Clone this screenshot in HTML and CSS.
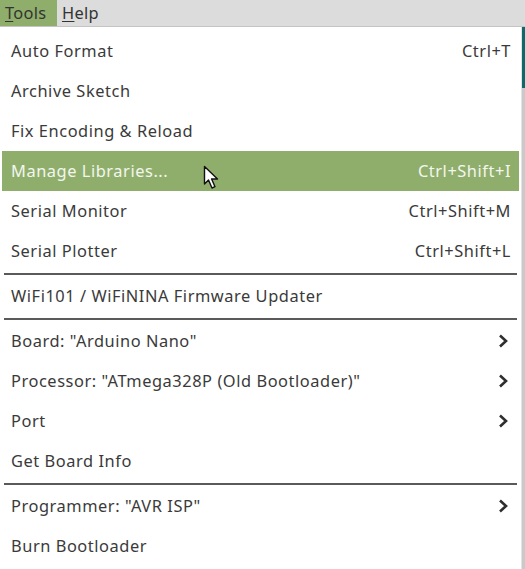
FILE: index.html
```html
<!DOCTYPE html>
<html>
<head>
<meta charset="utf-8">
<link rel="stylesheet" href="styles.css">
</head>
<body>
<div class="screen">
  <div class="menubar">
    <span class="mb-item active"><u>T</u>ools</span>
    <span class="mb-item"><u>H</u>elp</span>
  </div>
  <div class="main">
    <div class="menu">
      <div class="row"><span>Auto Format</span><span class="sc">Ctrl+T</span></div>
      <div class="row"><span>Archive Sketch</span></div>
      <div class="row"><span>Fix Encoding &amp; Reload</span></div>
      <div class="row hl"><span>Manage Libraries...</span><span class="sc">Ctrl+Shift+I</span>
        <svg class="cursor" width="18" height="26" viewBox="0 0 18 26"><path d="M1.5 1.5 L1.5 19 L5.5 15 L9 23 L12 21.7 L8.6 14 L14.5 14 Z" fill="#fff" stroke="#111" stroke-width="1.4" stroke-linejoin="round"/></svg>
      </div>
      <div class="row"><span>Serial Monitor</span><span class="sc">Ctrl+Shift+M</span></div>
      <div class="row"><span>Serial Plotter</span><span class="sc">Ctrl+Shift+L</span></div>
      <div class="sep"></div>
      <div class="row"><span>WiFi101 / WiFiNINA Firmware Updater</span></div>
      <div class="sep"></div>
      <div class="row"><span>Board: "Arduino Nano"</span><svg class="chev" width="12" height="16" viewBox="0 0 12 16"><path d="M3 2.5 L9 8 L3 13.5" fill="none" stroke="#2e2e2e" stroke-width="2.6"/></svg></div>
      <div class="row"><span>Processor: "ATmega328P (Old Bootloader)"</span><svg class="chev" width="12" height="16" viewBox="0 0 12 16"><path d="M3 2.5 L9 8 L3 13.5" fill="none" stroke="#2e2e2e" stroke-width="2.6"/></svg></div>
      <div class="row"><span>Port</span><svg class="chev" width="12" height="16" viewBox="0 0 12 16"><path d="M3 2.5 L9 8 L3 13.5" fill="none" stroke="#2e2e2e" stroke-width="2.6"/></svg></div>
      <div class="row"><span>Get Board Info</span></div>
      <div class="sep"></div>
      <div class="row"><span>Programmer: "AVR ISP"</span><svg class="chev" width="12" height="16" viewBox="0 0 12 16"><path d="M3 2.5 L9 8 L3 13.5" fill="none" stroke="#2e2e2e" stroke-width="2.6"/></svg></div>
      <div class="row"><span>Burn Bootloader</span></div>
    </div>
    <div class="side">
      <div class="teal"></div>
    </div>
  </div>
</div>
</body>
</html>
```

FILE: styles.css
```css
html, body {
  margin: 0;
  padding: 0;
}
body {
  width: 525px;
  height: 569px;
  overflow: hidden;
  font-family: "Noto Sans", "DejaVu Sans", sans-serif;
  font-size: 16.4px;
  letter-spacing: 0.55px;
  color: #3a3a3a;
  background: #d0d0d0;
}
.screen {
  display: flex;
  flex-direction: column;
  height: 569px;
}
.menubar {
  height: 27px;
  background: #dcdcdc;
  border-bottom: 1px solid #c4c4c4;
  display: flex;
  box-sizing: border-box;
}
.mb-item {
  padding: 0 4px 0 5px;
  line-height: 26px;
  color: #333;
  letter-spacing: 0.3px;
}
.mb-item u {
  text-decoration-thickness: 1px;
  text-underline-offset: 2px;
}
.mb-item.active {
  background: #8fae6b;
  width: 48px;
}
.main {
  flex: 1;
  display: flex;
}
.menu {
  width: 522px;
  background: #fff;
  box-sizing: border-box;
  padding: 4px 2px 0 2px;
  border-right: 1px solid #e3e3e3;
}
.side {
  flex: 1;
  background: #c9c9c9;
}
.teal {
  height: 61px;
  background: #0a6a6c;
}
.row {
  position: relative;
  height: 40px;
  box-sizing: border-box;
  display: flex;
  align-items: center;
  justify-content: space-between;
  padding: 0 8px 2px 9px;
}
.row.hl {
  background: #8fae6b;
  color: #f3f6ee;
}
.sc {
  color: #3a3a3a;
}
.row.hl .sc {
  color: #f3f6ee;
}
.chev {
  margin-right: 2px;
  margin-top: 2px;
}
.sep {
  height: 5px;
  display: flex;
  align-items: center;
  padding: 0 2px;
}
.sep::before {
  content: "";
  flex: 1;
  height: 2px;
  background: #5a5a5a;
}
.cursor {
  position: absolute;
  left: 201px;
  top: 14px;
}
```
